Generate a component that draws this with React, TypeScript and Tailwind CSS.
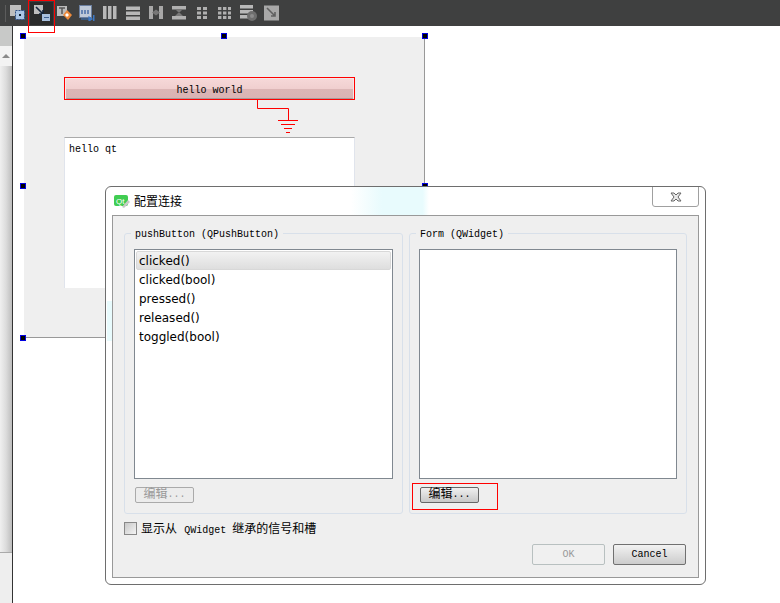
const mono = "font-['Liberation_Mono','Noto_Sans_CJK_SC',monospace]";
const ui = "font-['DejaVu_Sans','Noto_Sans_CJK_SC',sans-serif]";

const leftSignals = ['clicked()', 'clicked(bool)', 'pressed()', 'released()', 'toggled(bool)'];

function Handle({ className }: { className: string }) {
  return <div className={`absolute w-[6px] h-[6px] bg-black border border-[#0000e0] ${className}`} />;
}

function ToolIcon({ w, children }: { w: number; children: React.ReactNode }) {
  return (
    <svg width={w} height={16} viewBox={`0 0 ${w} 16`} className="shrink-0">
      {children}
    </svg>
  );
}

function Toolbar() {
  return (
    <div className="h-[26px] bg-[#3f4040] flex items-center shrink-0 relative">
      <div className="ml-[5px] w-px h-[17px] bg-[#5c5c5c]" />
      <div className="ml-[4px]">
        <ToolIcon w={16}>
          <rect x="0" y="0" width="11" height="11" fill="#bdbdbd" />
          <rect x="5.5" y="5.5" width="9" height="9" fill="#a9c4e4" stroke="#2d4f85" strokeDasharray="2 1" />
          <rect x="9" y="9" width="2" height="2" fill="#123" />
        </ToolIcon>
      </div>
      <div className="ml-[4px] w-[23px] h-[23px] bg-[#2a2b2b] flex items-center justify-center">
        <ToolIcon w={16}>
          <rect x="0" y="0" width="9" height="9" fill="#bdbdbd" />
          <path d="M2 2L9 9M9 5v4H5" stroke="#16263c" strokeWidth="1.6" fill="none" />
          <rect x="8" y="9" width="8" height="7" fill="#a8c0de" />
          <rect x="10" y="12" width="5" height="1" fill="#3d5f8f" />
        </ToolIcon>
      </div>
      <div className="ml-[4px]">
        <ToolIcon w={15}>
          <rect x="0" y="1" width="10" height="10" fill="#bcbcbc" />
          <path d="M2 3h6M5 3v6" stroke="#555" strokeWidth="1.5" />
          <path d="M10 5l5 5-4 5-5-5z" fill="#ee8a3a" />
          <path d="M10 8l2 2-2 2-2-2z" fill="#fff" />
        </ToolIcon>
      </div>
      <div className="ml-[7px]">
        <ToolIcon w={16}>
          <rect x="0.5" y="0.5" width="12" height="12" fill="#c0cad8" stroke="#6b7f9f" />
          <path d="M2 6h9M2 8h9" stroke="#4a6fa8" strokeWidth="1.5" strokeDasharray="2 1" />
          <path d="M2 14h10M10 12l3 2-3 2z" stroke="#3d78c4" strokeWidth="1.2" fill="#3d78c4" />
          <rect x="14" y="10" width="1.5" height="6" fill="#3d78c4" />
        </ToolIcon>
      </div>
      <div className="ml-[8px]">
        <ToolIcon w={14}>
          <rect x="0" y="1" width="3.5" height="13" fill="#b8b8b8" />
          <rect x="5" y="1" width="3.5" height="13" fill="#b8b8b8" />
          <rect x="10" y="1" width="3.5" height="13" fill="#b8b8b8" />
        </ToolIcon>
      </div>
      <div className="ml-[9px]">
        <ToolIcon w={14}>
          <rect x="0" y="1.5" width="14" height="3.5" fill="#b8b8b8" />
          <rect x="0" y="6.5" width="14" height="3.5" fill="#b8b8b8" />
          <rect x="0" y="11.5" width="14" height="3.5" fill="#b8b8b8" />
        </ToolIcon>
      </div>
      <div className="ml-[9px]">
        <ToolIcon w={14}>
          <rect x="0" y="1" width="4" height="13" fill="#a8a8a8" />
          <rect x="10" y="1" width="4" height="13" fill="#a8a8a8" />
          <path d="M3 7.5l4-3v6zM11 7.5l-4-3v6z" fill="#777" />
        </ToolIcon>
      </div>
      <div className="ml-[9px]">
        <ToolIcon w={14}>
          <rect x="0" y="1" width="14" height="3.5" fill="#b0b0b0" />
          <rect x="0" y="11" width="14" height="3.5" fill="#b0b0b0" />
          <path d="M7 8l-4-4h8zM7 7l-4 4h8z" fill="#777" />
        </ToolIcon>
      </div>
      <div className="ml-[11px]">
        <ToolIcon w={10}>
          <rect x="0" y="2" width="4" height="3" fill="#b0b0b0" />
          <rect x="6" y="2" width="4" height="3" fill="#b0b0b0" />
          <rect x="0" y="6.5" width="4" height="3" fill="#b0b0b0" />
          <rect x="6" y="6.5" width="4" height="3" fill="#b0b0b0" />
          <rect x="0" y="11" width="4" height="3" fill="#b0b0b0" />
          <rect x="6" y="11" width="4" height="3" fill="#b0b0b0" />
        </ToolIcon>
      </div>
      <div className="ml-[11px]">
        <ToolIcon w={13}>
          {[2, 6.5, 11].map(y =>
            [0, 5, 10].map(x => <rect key={`${x}-${y}`} x={x} y={y} width="3.4" height="3" fill="#b0b0b0" />)
          )}
        </ToolIcon>
      </div>
      <div className="ml-[9px]">
        <ToolIcon w={17}>
          <rect x="0" y="0" width="13" height="3.5" fill="#b8b8b8" />
          <rect x="0" y="5" width="13" height="3.5" fill="#b8b8b8" />
          <rect x="0" y="10" width="9" height="3.5" fill="#b8b8b8" />
          <circle cx="12" cy="11" r="5" fill="#6e6e6e" />
          <circle cx="12" cy="11" r="2" fill="#8c8c8c" />
        </ToolIcon>
      </div>
      <div className="ml-[7px]">
        <ToolIcon w={15}>
          <rect x="0" y="0.5" width="15" height="15" fill="#a8a8a8" />
          <path d="M3 3l8 8M11 7v4H7" stroke="#606060" strokeWidth="1.6" fill="none" />
        </ToolIcon>
      </div>
    </div>
  );
}

function ScrollBar() {
  return (
    <div className="w-[13px] shrink-0 border-r border-[#333] flex flex-col bg-[#f3f3f3]">
      <div className="h-[20px] bg-[#c8c9c8]" />
      <div className="h-[20px] flex items-center justify-center pr-px">
        <div className="w-0 h-0 border-l-[4px] border-r-[4px] border-b-[4px] border-l-transparent border-r-transparent border-b-[#8a8a8a]" />
      </div>
      <div className="h-[487px] bg-linear-to-r from-[#f0f0f0] via-[#dcdcdc] to-[#bdbdbd] border-b border-[#aaa]" />
      <div className="flex-1 bg-[#eeeeee]" />
    </div>
  );
}

function DesignerForm() {
  return (
    <div className="absolute left-[24px] top-[37px] w-[401px] h-[301px] bg-[#efefef] border-r border-b border-[#999] pt-[40px] pl-[40px]">
      <div className="w-[291px] h-[23px] border border-[#ff0000]">
        <div className={`h-full rounded-[2px] border border-[#f4e8e8] border-b-[#a89898] bg-[linear-gradient(to_bottom,#f6d8d8,#f0cfcf_50%,#dcb6b6_52%,#dab4b4)] flex items-center justify-center pt-[3px] text-[10px] text-black ${mono}`}>
          hello world
        </div>
      </div>
      <div className={`mt-[37px] w-[291px] h-[151px] bg-white border-t border-[#aaa] border-x border-x-[#e0e4ec] pl-[4px] pt-[5px] text-[10px] leading-[14px] text-black ${mono}`}>
        hello qt
      </div>
      <svg className="absolute left-[233px] top-[63px]" width="45" height="36" viewBox="0 0 45 36">
        <path d="M0.5 0V8.5H31.5V20M21 20.5H41M24 24.5H38M27 28.5H35M29 32.5H33" stroke="#ff0000" fill="none" />
      </svg>
      <Handle className="left-[-4px] top-[-4px]" />
      <Handle className="left-[197px] top-[-4px]" />
      <Handle className="left-[398px] top-[-4px]" />
      <Handle className="left-[-4px] top-[146px]" />
      <Handle className="left-[398px] top-[146px]" />
      <Handle className="left-[-4px] top-[298px]" />
    </div>
  );
}

function EditButton({ enabled }: { enabled: boolean }) {
  return (
    <button
      className={
        enabled
          ? `w-[59px] h-[16px] rounded-[2px] border border-[#666] bg-linear-to-b from-[#f0f0f0] to-[#c8c8c8] text-[12px] leading-[14px] text-black flex items-center justify-center ${mono}`
          : `w-[59px] h-[16px] rounded-[2px] border border-[#aaa] bg-[#ececec] text-[12px] leading-[14px] text-[#999] flex items-center justify-center ${mono}`
      }
    >
      编辑<span className="text-[10px]">...</span>
    </button>
  );
}

function SignalGroup({ title, items, enabled, width }: { title: string; items: string[]; enabled: boolean; width: string }) {
  return (
    <div className={`relative ${width} h-[281px] rounded-[3px] border border-[#d8e0ea] px-[9px] pt-[15px]`}>
      <div className={`absolute left-[6px] top-[-6px] bg-[#efefef] px-[4px] text-[10px] leading-[14px] text-black ${mono}`}>
        {title}
      </div>
      <div className={`h-[230px] bg-white border border-[#808890] p-px text-[12px] text-black ${ui}`}>
        {items.map((item, i) => (
          <div
            key={item}
            className={
              i === 0
                ? 'h-[19px] mb-px leading-[18px] pl-[2px] rounded-[2px] border border-[#d8d8d8] bg-linear-to-b from-[#f2f2f2] to-[#dedede]'
                : 'h-[19px] leading-[19px] pl-[3px]'
            }
          >
            {item}
          </div>
        ))}
      </div>
      <div className="mt-[8px] pl-px">
        <EditButton enabled={enabled} />
      </div>
    </div>
  );
}

function ConnectDialog() {
  return (
    <div className="absolute left-[105px] top-[186px] w-[601px] h-[399px] rounded-[6px] border border-[#6e6e6e] bg-white flex flex-col overflow-hidden">
      <div className="absolute left-[245px] top-0 w-[78px] h-[28px] bg-[linear-gradient(to_right,#fff,#e8fbfd_40%,#e8fbfd_92%,#fff)]" />
      <div className="absolute left-[1px] top-[114px] w-[5px] h-[40px] bg-[#e8fbfd]" />
      <div className="relative h-[28px] flex items-center shrink-0 pl-[8px]">
        <svg width="16" height="14" viewBox="0 0 16 14">
          <rect x="0" y="1" width="14" height="11" rx="2" fill="#41cd52" />
          <text x="2" y="10" fontSize="8" fontFamily="Liberation Sans" fill="#fff">Qt</text>
          <path d="M8 13l6-7 2 2-6 6z" fill="#c9c9c9" />
        </svg>
        <span className="ml-[4px] text-[12px] text-black font-['Noto_Sans_CJK_SC',sans-serif]">配置连接</span>
      </div>
      <div className="absolute right-[6px] top-[-1px] w-[47px] h-[21px] rounded-b-[3px] border border-[#a0a0a0] bg-white flex items-center justify-center">
        <svg width="12" height="10" viewBox="0 0 12 10">
          <path d="M1 1h3l2 2 2-2h3L8 5l3 4H8L6 7 4 9H1l3-4z" fill="#e8e8e8" stroke="#666" />
        </svg>
      </div>
      <div className="mx-[6px] mb-[6px] flex-1 border border-[#999] bg-[#efefef] relative">
        <div className="flex gap-[6px] ml-[11px] mt-[17px]">
          <SignalGroup title="pushButton (QPushButton)" items={leftSignals} enabled={false} width="w-[279px]" />
          <SignalGroup title="Form (QWidget)" items={[]} enabled={true} width="w-[278px]" />
        </div>
        <label className="flex items-start mt-[8px] ml-[11px]">
          <span className="w-[13px] h-[13px] border border-[#888] bg-linear-to-br from-[#c8c8c8] to-[#f4f4f4]" />
          <span className={`ml-[4px] text-[12px] leading-[17px] text-black ${mono}`}>
            显示从 <span className="text-[10px]">QWidget </span>继承的信号和槽
          </span>
        </label>
        <div className="flex justify-end gap-[8px] mt-[5px] mr-[12px]">
          <button className={`w-[73px] h-[21px] rounded-[2px] border border-[#b8c0c0] bg-[#f0f0f0] text-[10px] text-[#999] ${mono}`}>OK</button>
          <button className={`w-[73px] h-[21px] rounded-[2px] border border-[#707070] bg-linear-to-b from-[#f2f2f2] to-[#cccccc] text-[10px] text-black ${mono}`}>Cancel</button>
        </div>
      </div>
    </div>
  );
}

export default function App() {
  return (
    <div className="relative w-[780px] h-[603px] overflow-hidden bg-white flex flex-col">
      <Toolbar />
      <div className="flex-1 flex">
        <ScrollBar />
      </div>
      <DesignerForm />
      <ConnectDialog />
      {/* red marks drawn over the shot */}
      <div className="absolute left-[28px] top-0 w-[27px] h-[33px] border border-[#ff0000]" />
      <div className="absolute left-[412px] top-[483px] w-[86px] h-[27px] border border-[#ff0000]" />
    </div>
  );
}
